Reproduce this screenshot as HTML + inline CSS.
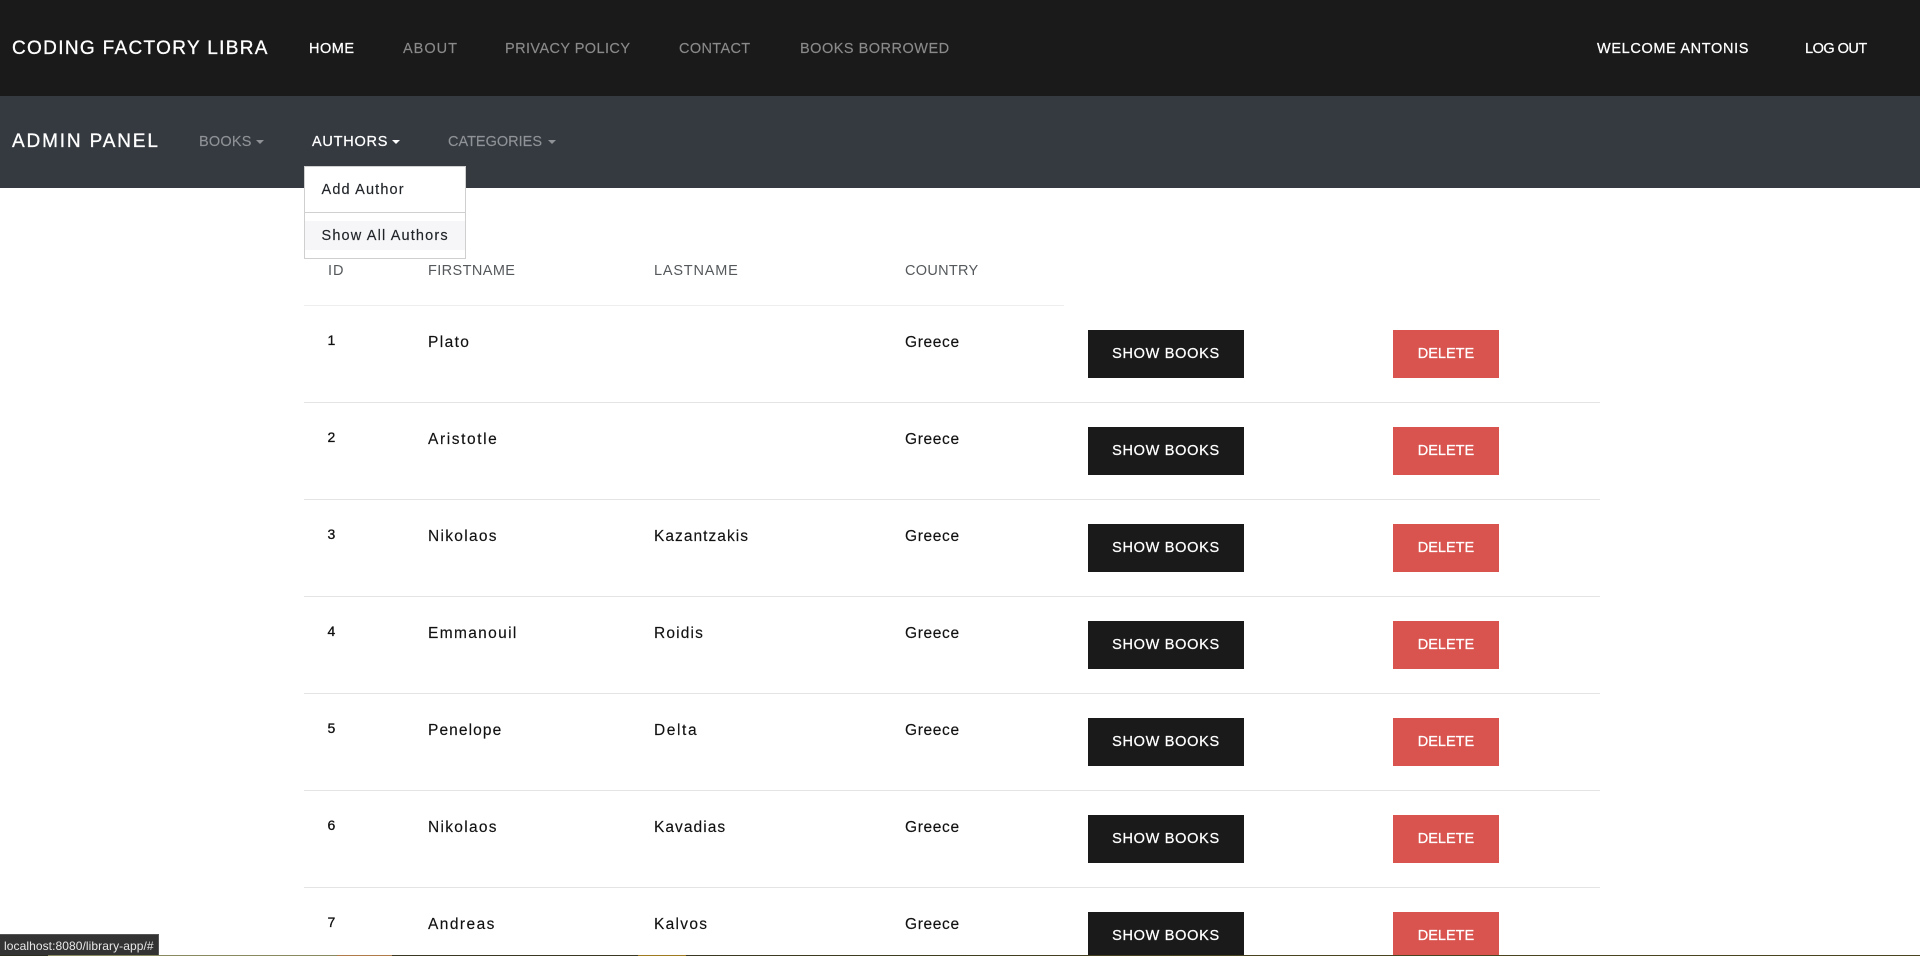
<!DOCTYPE html>
<html lang="en">
<head>
<meta charset="utf-8">
<title>Coding Factory Libra - Authors</title>
<style>
html,body{margin:0;padding:0;width:1920px;height:956px;overflow:hidden;background:#fff}
#page{position:relative;width:1920px;height:956px;overflow:hidden;background:#fff;font-family:"Liberation Sans",Arial,sans-serif;color:#111}
a{text-decoration:none;color:inherit}
.bar{position:absolute;left:0;width:1920px}
#top{top:0;height:96px;background:#1a1a1a}
#sub{top:96px;height:92px;background:#343a40}
.l{position:absolute;white-space:nowrap;line-height:20px;font-size:14.5px;height:20px;-webkit-text-stroke:.15px currentColor}
#top .l{top:39px;color:#8a8a8a}
#sub .l{top:36px;color:#8f9296}
#top .w,#sub .w{color:#fff;-webkit-text-stroke:.25px #fff}
.brand{font-size:19px!important;color:#fff!important;-webkit-text-stroke:.3px #fff}
.caret{position:absolute;top:8px;width:0;height:0;border-left:4px solid transparent;border-right:4px solid transparent;border-top:4px solid currentColor}
#menu{position:absolute;left:304px;top:166px;width:160px;height:91px;background:#fff;border:1px solid #cfcfcf;z-index:5}
#menu .l{left:16.5px;color:#212529;letter-spacing:1.15px}
#menu .div{position:absolute;left:0;top:45px;width:160px;height:1px;background:#d0d0d0}
#menu .hov{position:absolute;left:0;top:54px;width:160px;height:29px;background:#f6f6f8}
table{position:absolute;left:304px;top:249px;width:1296px;table-layout:fixed;border-collapse:separate;border-spacing:0}
th{height:57px;box-sizing:border-box;padding:12px 0 0 24px;vertical-align:top;text-align:left;font-weight:normal;font-size:14.5px;line-height:20px;color:#55595c;border-bottom:1px solid #eee}
th.e{border-bottom:0}
td{height:97px;box-sizing:border-box;padding:27px 0 0 24px;vertical-align:top;font-size:15.5px;line-height:20px;color:#111;border-bottom:1px solid #e4e4e4;-webkit-text-stroke:.15px currentColor}
td.id{font-size:14px;line-height:20px;padding-top:24px;color:#111;letter-spacing:0;padding-left:23.5px;-webkit-text-stroke:.3px #111}
td.b{padding-top:24px}
.btn{display:block;height:48px;line-height:48px;text-align:center;color:#fff;font-size:14.5px;white-space:nowrap;-webkit-text-stroke:.25px #fff}
.show{width:156px;background:#1a1a1a;letter-spacing:.7px}
.del{width:106px;background:#d9534f}
#status{position:absolute;left:0;top:934px;width:158px;height:20px;background:#333;border-top:1px solid #555;border-right:1px solid #555;z-index:6;color:#e8e8e8;font-size:12px;line-height:20px;letter-spacing:.08px;white-space:nowrap}
#status span{position:absolute;left:4px;top:1px}
#strip{position:absolute;left:0;top:955px;width:1920px;height:1px;z-index:7;background:linear-gradient(to right,#2d2d1f 0,#2d2d1f 48px,#8a8a60 48px,#8a8a60 337px,#b07a4a 337px,#b07a4a 392px,#3a3822 392px,#3a3822 638px,#a07a20 638px,#a07a20 686px,#3a3822 686px,#4a4420 1300px,#4a4420 1920px)}
</style>
</head>
<body>
<div id="page">
<nav class="bar" id="top">
<a href="#" class="l brand" style="left:12px;letter-spacing:1.33px">CODING FACTORY LIBRA</a>
<a href="#" class="l w" style="left:309px;letter-spacing:.5px">HOME</a>
<a href="#" class="l" style="left:403px;letter-spacing:1px">ABOUT</a>
<a href="#" class="l" style="left:505px;letter-spacing:.42px">PRIVACY POLICY</a>
<a href="#" class="l" style="left:679px;letter-spacing:.36px">CONTACT</a>
<a href="#" class="l" style="left:800px;letter-spacing:.5px">BOOKS BORROWED</a>
<a href="#" class="l w" style="left:1597px;letter-spacing:.65px">WELCOME ANTONIS</a>
<a href="#" class="l w" style="left:1805px;letter-spacing:-.5px">LOG OUT</a>
</nav>
<nav class="bar" id="sub">
<a href="#" class="l brand" style="left:12px;letter-spacing:1.85px">ADMIN PANEL</a>
<a href="#" class="l" style="left:199px;width:65px;letter-spacing:.2px">BOOKS<i class="caret" style="left:57px"></i></a>
<a href="#" class="l w" style="left:312px;width:88px;letter-spacing:.75px">AUTHORS<i class="caret" style="left:80px"></i></a>
<a href="#" class="l" style="left:448px;width:108px">CATEGORIES<i class="caret" style="left:100px"></i></a>
</nav>
<div id="menu">
<div class="hov"></div>
<a href="#" class="l" style="top:13px">Add Author</a>
<div class="div"></div>
<a href="#" class="l" style="top:59px">Show All Authors</a>
</div>
<table>
<colgroup><col style="width:100px"><col style="width:226px"><col style="width:251px"><col style="width:183px"><col style="width:305px"><col style="width:231px"></colgroup>
<thead><tr>
<th style="letter-spacing:1px">ID</th><th style="letter-spacing:.4px">FIRSTNAME</th><th style="letter-spacing:.8px">LASTNAME</th><th style="letter-spacing:.3px">COUNTRY</th><th class="e"></th><th class="e"></th>
</tr></thead>
<tbody>
<tr><td class="id">1</td><td style="letter-spacing:1.4px">Plato</td><td></td><td style="letter-spacing:.65px">Greece</td><td class="b"><a href="#" class="btn show">SHOW BOOKS</a></td><td class="b"><a href="#" class="btn del">DELETE</a></td></tr>
<tr><td class="id">2</td><td style="letter-spacing:1.6px">Aristotle</td><td></td><td style="letter-spacing:.65px">Greece</td><td class="b"><a href="#" class="btn show">SHOW BOOKS</a></td><td class="b"><a href="#" class="btn del">DELETE</a></td></tr>
<tr><td class="id">3</td><td style="letter-spacing:1.3px">Nikolaos</td><td style="letter-spacing:1.04px">Kazantzakis</td><td style="letter-spacing:.65px">Greece</td><td class="b"><a href="#" class="btn show">SHOW BOOKS</a></td><td class="b"><a href="#" class="btn del">DELETE</a></td></tr>
<tr><td class="id">4</td><td style="letter-spacing:1.35px">Emmanouil</td><td style="letter-spacing:1.15px">Roidis</td><td style="letter-spacing:.65px">Greece</td><td class="b"><a href="#" class="btn show">SHOW BOOKS</a></td><td class="b"><a href="#" class="btn del">DELETE</a></td></tr>
<tr><td class="id">5</td><td style="letter-spacing:1.1px">Penelope</td><td style="letter-spacing:1.6px">Delta</td><td style="letter-spacing:.65px">Greece</td><td class="b"><a href="#" class="btn show">SHOW BOOKS</a></td><td class="b"><a href="#" class="btn del">DELETE</a></td></tr>
<tr><td class="id">6</td><td style="letter-spacing:1.3px">Nikolaos</td><td style="letter-spacing:1.05px">Kavadias</td><td style="letter-spacing:.65px">Greece</td><td class="b"><a href="#" class="btn show">SHOW BOOKS</a></td><td class="b"><a href="#" class="btn del">DELETE</a></td></tr>
<tr><td class="id">7</td><td style="letter-spacing:1.45px">Andreas</td><td style="letter-spacing:1.3px">Kalvos</td><td style="letter-spacing:.65px">Greece</td><td class="b"><a href="#" class="btn show">SHOW BOOKS</a></td><td class="b"><a href="#" class="btn del">DELETE</a></td></tr>
</tbody>
</table>
<div id="status"><span>localhost:8080/library-app/#</span></div>
<div id="strip"></div>
</div>
</body>
</html>
